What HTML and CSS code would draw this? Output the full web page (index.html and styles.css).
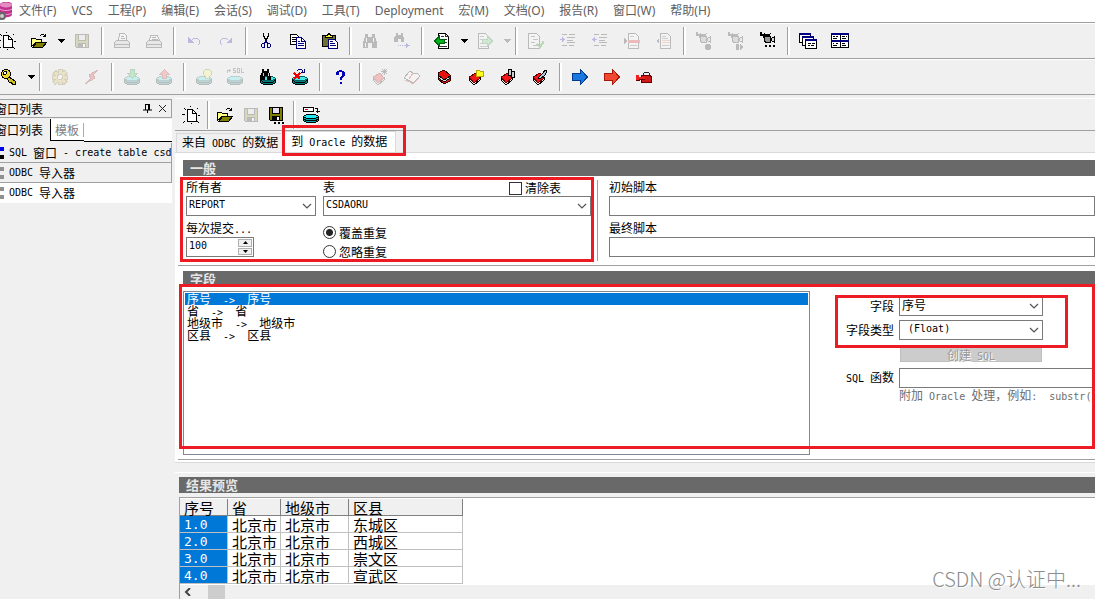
FILE: index.html
```
<!DOCTYPE html>
<html lang="zh-CN">
<head>
<meta charset="utf-8">
<title>ODBC 导入器</title>
<link rel="stylesheet" href="styles.css">
</head>
<body>
<svg class="sprite" aria-hidden="true">
  <symbol id="i-new" viewBox="0 0 18 18"><path d="M5.500 3.500h5l4 4v8h-9z" fill="#fff" stroke="#000"/><path d="M10.500 3.500v4h4" fill="none" stroke="#000"/><path d="M8 0h1v1H8zM2 2h1v1H2zM3 3h1v1H3zM15 2h1v1h-1zM0 8h3v1H0zM16 9h2v1h-2zM2 15h1v1H2zM1 16h1v1H1zM15 15h1v1h-1zM16 16h1v1h-1zM9 17h1v1H9z"/></symbol>
  <symbol id="i-open" viewBox="0 0 16 16"><path d="M.5 5.500h4l1 1h5v3h-6l-4 4z" fill="#ffff80" stroke="#000"/><path d="M1.500 14.500l4-5h10l-4 5z" fill="#808000" stroke="#000"/><path d="M8.500 3.500l2-2h2l2 2M14.500.5v3h-3" fill="none" stroke="#000"/></symbol>
  <symbol id="i-save" viewBox="0 0 16 16"><path d="M1.500 1.500h13v13h-12l-1-1z" fill="#808000" stroke="#000"/><path d="M4.500 1.500h7v6h-7z" fill="#e8e0f0" stroke="#000"/><path d="M4 10h8v5H4z" fill="#000"/><path d="M9 11h2v3H9z" fill="#fff"/></symbol>
  <symbol id="i-saveas" viewBox="0 0 18 18"><path d="M1.500 1.500h13v13h-12l-1-1z" fill="#808000" stroke="#000"/><path d="M4.500 1.500h7v6h-7z" fill="#e8e0f0" stroke="#000"/><path d="M4 10h8v5H4z" fill="#000"/><path d="M9 11h2v3H9z" fill="#fff"/><path d="M6 16h2v2H6zM10 16h2v2h-2zM14 16h2v2h-2z"/></symbol>
  <symbol id="i-print" viewBox="0 0 16 16"><path d="M4.500 7.500l1-7h5l2 2v5" fill="#fff" stroke="#000"/><path d="M7 3.500h3M7 5.500h4" stroke="#000"/><path d="M.5 9.500l2-2h11l2 2v5H.5z" fill="#ccc" stroke="#000"/><path d="M1 11.500h14" stroke="#000"/></symbol>
  <symbol id="i-print2" viewBox="0 0 16 16"><path d="M3.500 7.500l1-5h7l2 5" fill="#fff" stroke="#000"/><path d="M6 4.500h4M6 6.500h6" stroke="#000"/><path d="M.5 9.500l2-2h11l2 2v5H.5z" fill="#ccc" stroke="#000"/><path d="M1 11.500h14" stroke="#000"/></symbol>
  <symbol id="i-undo" viewBox="0 0 16 16"><path d="M5.500 7.500l2-2h4l2 2v3l-2 2" fill="none" stroke="#0000a0"/><path d="M2 4v6h6z" fill="#0000a0"/></symbol>
  <symbol id="i-redo" viewBox="0 0 16 16"><path d="M10.500 7.500l-2-2h-4l-2 2v3l2 2" fill="none" stroke="#0000a0"/><path d="M14 4v6H8z" fill="#0000a0"/></symbol>
  <symbol id="i-cut" viewBox="0 0 16 16"><path d="M5.500 0v3l3 5M10.500 0v3l-3 5" fill="none" stroke="#000" stroke-width="1.400"/><path d="M7.500 7v2l-2 2M8.500 7v2l2 2" fill="none" stroke="#000080"/><path d="M4.500 10.500h2v4h-2l-1-1v-2zM9.500 10.500h2l1 1v2l-1 1h-2z" fill="none" stroke="#000080"/></symbol>
  <symbol id="i-copy" viewBox="0 0 16 16"><path d="M.5 1.500h6l3 3v7h-9z" fill="#fff" stroke="#000"/><path d="M2 4.500h4M2 6.500h5M2 8.500h5" stroke="#000"/><path d="M6.500 4.500h5l4 4v7h-9z" fill="#fff" stroke="#000080"/><path d="M11.500 4.500v4h4M8 8.500h2M8 10.500h6M8 12.500h6" fill="none" stroke="#000080"/></symbol>
  <symbol id="i-paste" viewBox="0 0 16 16"><path d="M.5 2.500h13v11H.5z" fill="#707030" stroke="#000"/><path d="M3.500 4.500v-2h2l1-2h1l1 2h2v2z" fill="#ffff40" stroke="#000"/><path d="M6.500 6.500h6l3 3v6h-9z" fill="#fff" stroke="#000080"/><path d="M8 8.500h3M8 10.500h5M8 12.500h6" stroke="#000080"/></symbol>
  <symbol id="i-find" viewBox="0 0 16 16"><path d="M3 1h3v3h4V1h3v3l2 5v6h-5v-5H6v5H1V9l2-5z"/><path d="M4.500 5v4M11.500 5v4M3.500 10v4" stroke="#fff"/></symbol>
  <symbol id="i-findnext" viewBox="0 0 16 16"><path d="M2 0h2v2h3V0h2v2l1 3v4H7V6H4v3H0V5l2-3z"/><path d="M4 12.500h7" stroke="#0000a0" stroke-dasharray="1 1"/><path d="M11 12.500h5M12.500 10v5M13.500 11v3" fill="none" stroke="#0000a0"/></symbol>
  <symbol id="i-back" viewBox="0 0 16 16"><path d="M4.500.5h7l3 3v12h-10z" fill="#fff" stroke="#000" stroke-width="1.400"/><path d="M11.500.5v3h3M7 3.500h3M10 6.500h3M10 9.500h3M6 13.500h7" fill="none" stroke="#333"/><path d="M.5 8l5-5v3h5v4h-5v3z" fill="#00b020" stroke="#006010"/></symbol>
  <symbol id="i-forward" viewBox="0 0 16 16"><path d="M1.500.5h7l3 3v12h-10z" fill="#fff" stroke="#000"/><path d="M3 3.500h4M3 6.500h3M3 10.500h3M3 13.500h7" stroke="#555"/><path d="M15.500 8l-5-5v3h-5v4h5v3z" fill="#60d060" stroke="#108030"/></symbol>
  <symbol id="i-check" viewBox="0 0 16 16"><path d="M.5.5h8l3 3v12H.5z" fill="#fff" stroke="#000"/><path d="M3 3.500h4M5 6.500h5M3 9.500h4M5 12.500h4" stroke="#333" stroke-width="1.400"/><path d="M9 11l3 3 4-6" fill="none" stroke="#008000" stroke-width="2"/></symbol>
  <symbol id="i-indent" viewBox="0 0 16 16"><path d="M2 1.500h5M9 1.500h6M7 4.500h8M7 7.500h6M7 9.500h8M2 12.500h5M9 12.500h5" stroke="#000"/><path d="M0 6.500h5M2.500 4v5M3.500 5v3" fill="none" stroke="#0000c0"/></symbol>
  <symbol id="i-outdent" viewBox="0 0 16 16"><path d="M2 1.500h5M9 1.500h6M7 4.500h8M7 7.500h6M7 9.500h8M2 12.500h5M9 12.500h5" stroke="#000"/><path d="M0 6.500h5M2.500 4v5M1.500 5v3" fill="none" stroke="#0000c0"/></symbol>
  <symbol id="i-comment" viewBox="0 0 16 16"><path d="M4.500.5h7l3 3v12h-10z" fill="#fff" stroke="#000"/><path d="M6 3.500h4M6 12.500h7" stroke="#555"/><path d="M4 7h12v3H4z" fill="#e00000"/><path d="M0 5l3 3-3 3z"/></symbol>
  <symbol id="i-uncomment" viewBox="0 0 16 16"><path d="M4.500.5h7l3 3v12h-10z" fill="#fff" stroke="#000"/><path d="M6 3.500h4M6 5.500h6M6 12.500h7" stroke="#555"/><path d="M6 7.500h8M6 9.500h8" stroke="#e08060"/><path d="M3 5L0 8l3 3z"/></symbol>
  <symbol id="i-cam" viewBox="0 0 18 18"><path d="M5.500 4.500h6v6h-5l-1-2z" fill="#999" stroke="#000"/><path d="M1 0h2v2h8v2H5v2H4V4H1z"/><path d="M5 1h1v1H5zM11 1h1v1h-1z"/><path d="M12.500 6.500l3-2v6l-3-2z" fill="#ddd" stroke="#000"/></symbol>
  <symbol id="i-rec" viewBox="0 0 18 18"><use href="#i-cam"/><circle cx="13" cy="15" r="3"/></symbol>
  <symbol id="i-play" viewBox="0 0 18 18"><use href="#i-cam"/><path d="M9 12h3v6H9zM13 12l3 3-3 3z"/></symbol>
  <symbol id="i-camdots" viewBox="0 0 18 18"><use href="#i-cam"/><path d="M6 13h2v2H6zM10 13h2v2h-2zM14 13h2v2h-2z"/></symbol>
  <symbol id="i-cascade" viewBox="0 0 18 18"><g fill="#fff" stroke="#000"><path d="M.5 1.500h11v9H.5z"/><path d="M3.500 4.500h11v9h-11z"/><path d="M6.500 7.500h11v9h-11z"/></g><path d="M0 1h12v2H0zM3 4h12v2H3zM6 7h12v2H6z" fill="#000080"/><path d="M9 11.500h3M13 11.500h3M9 13.500h2M12 13.500h3" stroke="#000"/></symbol>
  <symbol id="i-tile" viewBox="0 0 18 18"><path d="M.5 1.500h17v14H.5zM9 1v14M1 8.500h16" fill="#fff" stroke="#000"/><path d="M0 1h18v2H0zM0 8h18v2H0z" fill="#000080"/><path d="M2 4.500h2M5 4.500h2M11 4.500h3M15 4.500h1M2 6.500h4M11 6.500h4M2 11.500h1M5 11.500h2M11 11.500h3M2 13.500h4M11 13.500h4" stroke="#000"/></symbol>
  <symbol id="i-key" viewBox="0 0 16 16"><path d="M7.500 7.500l7 5v3h-3l-1-2h-2l-3-5" fill="#d0c020" stroke="#000"/><circle cx="5" cy="5" r="4.500" fill="#e8d830" stroke="#000"/><circle cx="4" cy="4" r="1.500" fill="#fff" stroke="#000"/></symbol>
  <symbol id="i-gear" viewBox="0 0 16 16"><path d="M6 .5h4v2l3-1 2 3-2 2h2.500v4H13l2 2-3 3-2-2v2H6v-2l-3 2-2-3 2-2H.5v-4H3l-2-2 3-3 2 2z" fill="#d0b840" stroke="#776610"/><circle cx="8" cy="8" r="2.500" fill="#fff" stroke="#776610"/></symbol>
  <symbol id="i-bolt" viewBox="0 0 16 16"><path d="M14 1L5 6l2 3-6 6 10-6-2-3z" fill="#f02020" stroke="#700"/></symbol>
  <symbol id="i-db" viewBox="0 0 16 16"><path d="M.5 9.500v4l3 2h9l3-2v-4z" fill="#008080" stroke="#000"/><path d="M1 11.500l3 2h8l3-2" fill="none" stroke="#000"/><path d="M.5 9.500l3-2h9l3 2-3 2h-9z" fill="#40e8e8" stroke="#006060"/></symbol>
  <symbol id="i-commit" viewBox="0 0 16 16"><use href="#i-db"/><path d="M6.500.5h4v4h3l-5 5-5-5h3z" fill="#20c840" stroke="#087018"/></symbol>
  <symbol id="i-rollback" viewBox="0 0 16 16"><use href="#i-db"/><path d="M6.500 9.500h4v-4h3l-5-5-5 5h3z" fill="#f04040" stroke="#901010"/></symbol>
  <symbol id="i-dbbulb" viewBox="0 0 16 16"><use href="#i-db"/><path d="M9.500.5h4l2 2v3l-2 2v2h-4v-2l-2-2v-3z" fill="#ffff60" stroke="#776610"/></symbol>
  <symbol id="i-dbsql" viewBox="0 0 18 18"><g transform="translate(0 1)"><use href="#i-db" width="16" height="16"/></g><path d="M.5 5V2.500h3M2.500 1v3M9 .5H6.500v2h2v2H6M10.500.5h2v4h-2zM14.500 0v4.500H17" fill="none" stroke="#333"/></symbol>
  <symbol id="i-dbfind" viewBox="0 0 16 16"><use href="#i-db"/><path d="M2 0h2v2h3V0h2v3l2 5v3H7V7H5v4H0V7l2-4z"/><path d="M3.500 4v3M8.500 4v3" stroke="#ccc"/></symbol>
  <symbol id="i-dberr" viewBox="0 0 16 16"><use href="#i-db"/><path d="M2 4l6 6M8 4l-6 6" stroke="#f00000" stroke-width="2.400"/><path d="M4.500 2.500l2-2h3l2 3M12.500 0v3.500H9" fill="none" stroke="#000080"/></symbol>
  <symbol id="i-help" viewBox="0 0 16 16"><path d="M4 3h1V2h2V1h3v1h2v1h1v4h-1v1h-1v1h-1v2H8V8h1V7h1V3H7v3H4zM8 13h2v2H8z" fill="#0000c0"/></symbol>
  <symbol id="i-book" viewBox="0 0 16 16"><path d="M1 9l5 5 6-5v2l-6 5-5-5z" fill="#eee" stroke="#000"/><path d="M1 8l7-4 4 5-6 5z" fill="#f01818" stroke="#600"/></symbol>
  <symbol id="i-bookstar" viewBox="0 0 16 16"><use href="#i-book"/><path d="M12.500 0v6M9 2.500h6M10 0l5 5M15 0l-5 5" stroke="#000"/></symbol>
  <symbol id="i-bookopen" viewBox="0 0 16 16"><path d="M0 9l6-7 3 2 5 1 2 2-7 7-3-2z" fill="#fff" stroke="#000"/><path d="M9 4L5 10M1 11l5 2 3 2 6-6" fill="none" stroke="#b00"/></symbol>
  <symbol id="i-books" viewBox="0 0 16 16"><path d="M2 4l6-3 6 5v6l-6 3-6-5z" fill="#e81010" stroke="#300"/><path d="M2 6l6 5 6-4M2 8l6 5 6-4" fill="none" stroke="#000"/><path d="M3 8l5 4 5-3" fill="none" stroke="#ddd"/></symbol>
  <symbol id="i-bookfolder" viewBox="0 0 16 16"><use href="#i-book"/><path d="M8.500 1.500h3l1 1h3v5h-7z" fill="#ffff20" stroke="#bba500"/></symbol>
  <symbol id="i-bookcopy" viewBox="0 0 16 16"><use href="#i-book"/><path d="M8.500.5h3v6h-3zM11.500 2.500h3v6h-3z" fill="#ccc" stroke="#000"/></symbol>
  <symbol id="i-bookpen" viewBox="0 0 16 16"><use href="#i-book"/><path d="M6 9l5-5 2-3 2 1-2 4-5 4z" fill="#acd" stroke="#000"/></symbol>
  <symbol id="i-bluearrow" viewBox="0 0 16 16"><path d="M.5 4.500h8v-4l7 7.500-7 7.500v-4h-8z" fill="#1878e0" stroke="#003c90"/></symbol>
  <symbol id="i-redarrow" viewBox="0 0 16 16"><path d="M.5 4.500h8v-4l7 7.500-7 7.500v-4h-8z" fill="#f04830" stroke="#a81808"/></symbol>
  <symbol id="i-toolbox" viewBox="0 0 16 16"><path d="M7.500 7V4.500l1-1h4l1 1V7" fill="none" stroke="#222" stroke-width="1.400"/><path d="M5.500 6.500h9l1 2v5h-10z" fill="#d01818" stroke="#600"/><path d="M0 6h3v2h6v2H3v1H0z" fill="#f02020"/><path d="M0 11h3v-1h6" fill="none" stroke="#600"/></symbol>
  <symbol id="i-dbimport" viewBox="0 0 18 18"><path d="M1.500 10.500v4l3 2h9l3-2v-4z" fill="#00b0b0" stroke="#000"/><path d="M2 13.500l3 1h8l3-1" fill="none" stroke="#000"/><path d="M1.500 10.500l3-2h9l3 2-3 2h-9z" fill="#20e8f0" stroke="#000"/><path d="M1.500 1.500h10v4h-10z" fill="#fff" stroke="#000"/><path d="M3 3.500h3" stroke="#f00"/><path d="M13 2.500h2.500V7M13.500 5.500h4" fill="none" stroke="#000"/></symbol>
  <symbol id="i-chev" viewBox="0 0 10 6"><path d="M1 1l4 4 4-4" fill="none" stroke="#555" stroke-width="1.200"/></symbol>
  <symbol id="i-drop" viewBox="0 0 8 4"><path d="M0 0h8L4 4z"/></symbol>
</svg>

<div class="app">
  <nav class="menu">
    <svg class="logo" viewBox="0 0 14 18"><path d="M0 2c3-3 10-3 12 0v11c-2 3-9 3-12 0z" fill="#c0308c"/><ellipse cx="6" cy="3" rx="6" ry="2.500" fill="#e68cc4"/><path d="M0 7c3 2 9 2 12 0M0 11c3 2 9 2 12 0" fill="none" stroke="#f0a8d4"/><circle cx="2" cy="14" r="3" fill="#ccc" stroke="#666" stroke-width="2"/></svg>
    <a href="#">文件(F)</a><a href="#">VCS</a><a href="#">工程(P)</a><a href="#">编辑(E)</a><a href="#">会话(S)</a><a href="#">调试(D)</a><a href="#">工具(T)</a><a href="#">Deployment</a><a href="#">宏(M)</a><a href="#">文档(O)</a><a href="#">报告(R)</a><a href="#">窗口(W)</a><a href="#">帮助(H)</a>
  </nav>

  <div class="bar bar-main">
    <button aria-label="新建"><svg class="wide"><use href="#i-new"/></svg></button>
    <button aria-label="打开"><svg><use href="#i-open"/></svg></button>
    <button class="drop" aria-label="最近文件"><svg><use href="#i-drop"/></svg></button>
    <button disabled aria-label="保存"><svg><use href="#i-save"/></svg></button>
    <i class="sep"></i>
    <button disabled aria-label="打印"><svg><use href="#i-print"/></svg></button>
    <button disabled aria-label="打印设置"><svg><use href="#i-print2"/></svg></button>
    <i class="sep"></i>
    <button disabled aria-label="撤销"><svg><use href="#i-undo"/></svg></button>
    <button disabled aria-label="重做"><svg><use href="#i-redo"/></svg></button>
    <i class="sep"></i>
    <button aria-label="剪切"><svg><use href="#i-cut"/></svg></button>
    <button aria-label="复制"><svg><use href="#i-copy"/></svg></button>
    <button aria-label="粘贴"><svg><use href="#i-paste"/></svg></button>
    <i class="sep"></i>
    <button disabled aria-label="查找"><svg><use href="#i-find"/></svg></button>
    <button disabled aria-label="查找下一个"><svg><use href="#i-findnext"/></svg></button>
    <i class="sep"></i>
    <button aria-label="后退"><svg><use href="#i-back"/></svg></button>
    <button class="drop" aria-label="后退列表"><svg><use href="#i-drop"/></svg></button>
    <button disabled aria-label="前进"><svg><use href="#i-forward"/></svg></button>
    <button disabled class="drop" aria-label="前进列表"><svg><use href="#i-drop"/></svg></button>
    <i class="sep"></i>
    <button disabled aria-label="检查"><svg><use href="#i-check"/></svg></button>
    <button disabled aria-label="缩进"><svg><use href="#i-indent"/></svg></button>
    <button disabled aria-label="取消缩进"><svg><use href="#i-outdent"/></svg></button>
    <button disabled aria-label="注释"><svg><use href="#i-comment"/></svg></button>
    <button disabled aria-label="取消注释"><svg><use href="#i-uncomment"/></svg></button>
    <i class="sep"></i>
    <button disabled aria-label="录制宏"><svg class="wide"><use href="#i-rec"/></svg></button>
    <button disabled aria-label="播放宏"><svg class="wide"><use href="#i-play"/></svg></button>
    <button aria-label="宏库"><svg class="wide"><use href="#i-camdots"/></svg></button>
    <i class="sep"></i>
    <button aria-label="层叠"><svg class="wide"><use href="#i-cascade"/></svg></button>
    <button aria-label="平铺"><svg class="wide"><use href="#i-tile"/></svg></button>
  </div>

  <div class="bar bar-session">
    <button aria-label="登录"><svg><use href="#i-key"/></svg></button>
    <button class="drop" aria-label="登录列表"><svg><use href="#i-drop"/></svg></button>
    <i class="sep"></i>
    <button disabled aria-label="执行"><svg><use href="#i-gear"/></svg></button>
    <button disabled aria-label="中断"><svg><use href="#i-bolt"/></svg></button>
    <i class="sep"></i>
    <button disabled aria-label="提交"><svg><use href="#i-commit"/></svg></button>
    <button disabled aria-label="回滚"><svg><use href="#i-rollback"/></svg></button>
    <i class="sep"></i>
    <button disabled aria-label="解释计划"><svg><use href="#i-dbbulb"/></svg></button>
    <button disabled aria-label="SQL"><svg class="wide"><use href="#i-dbsql"/></svg></button>
    <button aria-label="查找数据库对象"><svg><use href="#i-dbfind"/></svg></button>
    <button aria-label="编译无效对象"><svg><use href="#i-dberr"/></svg></button>
    <i class="sep"></i>
    <button aria-label="帮助"><svg><use href="#i-help"/></svg></button>
    <i class="sep"></i>
    <button disabled aria-label="新建书签"><svg><use href="#i-bookstar"/></svg></button>
    <button disabled aria-label="打开手册"><svg><use href="#i-bookopen"/></svg></button>
    <button aria-label="手册"><svg><use href="#i-books"/></svg></button>
    <button aria-label="文件夹"><svg><use href="#i-bookfolder"/></svg></button>
    <button aria-label="复制手册"><svg><use href="#i-bookcopy"/></svg></button>
    <button aria-label="编辑手册"><svg><use href="#i-bookpen"/></svg></button>
    <i class="sep"></i>
    <button aria-label="下一步"><svg><use href="#i-bluearrow"/></svg></button>
    <button aria-label="跳转"><svg><use href="#i-redarrow"/></svg></button>
    <button aria-label="工具箱"><svg><use href="#i-toolbox"/></svg></button>
  </div>

  <div class="body">
    <aside class="side">
      <div class="side-title"><span>窗口列表</span>
        <button aria-label="固定"><svg viewBox="0 0 9 9"><path d="M2.500 0v6M2 .5h5M5.500 0v6M6.500 0v6M0 6h9M4.500 6v3" fill="none" stroke="#000"/></svg></button>
        <button aria-label="关闭"><svg viewBox="0 0 9 9"><path d="M1 1l7 7M8 1L1 8" stroke="#222"/></svg></button>
      </div>
      <div class="side-tabs"><button class="on">窗口列表</button><button>模板</button></div>
      <ul class="windows">
        <li class="sql"><span class="en">SQL</span> 窗口 <span class="en">- create table csd</span></li>
        <li class="current"><span class="en">ODBC</span> 导入器</li>
        <li class="last"><span class="en">ODBC</span> 导入器</li>
      </ul>
    </aside>

    <main class="work">
      <div class="bar bar-doc">
        <button aria-label="新建"><svg class="wide"><use href="#i-new"/></svg></button>
        <i class="sep"></i>
        <button aria-label="打开"><svg><use href="#i-open"/></svg></button>
        <button disabled aria-label="保存"><svg><use href="#i-save"/></svg></button>
        <button aria-label="另存为"><svg class="wide"><use href="#i-saveas"/></svg></button>
        <i class="sep"></i>
        <button aria-label="导入"><svg class="wide"><use href="#i-dbimport"/></svg></button>
      </div>
      <div class="tabs">
        <button>来自<span class="en"> ODBC </span>的数据</button>
        <button class="on">到<span class="en"> Oracle </span>的数据</button>
      </div>

      <div class="page">
        <section class="general">
          <h2>一般</h2>
          <div class="general-form">
            <div class="col owner">
              <label for="owner">所有者</label>
              <span class="combo"><select id="owner" class="en"><option>REPORT</option></select><svg><use href="#i-chev"/></svg></span>
              <label for="every" class="second">每次提交<span class="en">...</span></label>
              <span class="spin"><input id="every" class="en" value="100"><span class="steps"><button aria-label="增加"><svg><path d="M0 3h5L2.500 0z"/></svg></button><button aria-label="减少"><svg><path d="M0 0h5L2.500 3z"/></svg></button></span></span>
            </div>
            <div class="col target">
              <div class="split"><label for="table">表</label><label class="tick"><input type="checkbox">清除表</label></div>
              <span class="combo"><select id="table" class="en"><option>CSDAORU</option></select><svg><use href="#i-chev"/></svg></span>
              <label class="radio first"><input type="radio" name="dup" checked>覆盖重复</label>
              <label class="radio"><input type="radio" name="dup">忽略重复</label>
            </div>
            <div class="col scripts">
              <label for="init">初始脚本</label>
              <input id="init" class="text">
              <label for="final" class="second">最终脚本</label>
              <input id="final" class="text">
            </div>
          </div>
        </section>

        <section class="fields">
          <h2>字段</h2>
          <div class="fields-form">
            <ul class="list">
              <li class="picked">序号<span class="en">  -&gt;  </span>序号</li>
              <li>省<span class="en">  -&gt;  </span>省</li>
              <li>地级市<span class="en">  -&gt;  </span>地级市</li>
              <li>区县<span class="en">  -&gt;  </span>区县</li>
            </ul>
            <div class="props">
              <label for="field">字段</label>
              <span class="combo"><select id="field"><option>序号</option></select><svg><use href="#i-chev"/></svg></span>
              <label for="type">字段类型</label>
              <span class="combo"><select id="type" class="en"><option>&nbsp;(Float)</option></select><svg><use href="#i-chev"/></svg></span>
              <button class="create" disabled>创建<span class="en"> SQL</span></button>
              <label for="func"><span class="en">SQL </span>函数</label>
              <input id="func" class="text">
              <p class="hint">附加<span class="en"> Oracle </span>处理，例如<span class="en">:  substr(</span></p>
            </div>
          </div>
        </section>
      </div>

      <section class="preview">
        <h2>结果预览</h2>
        <div class="grid">
          <table>
            <colgroup><col class="c1"><col class="c2"><col class="c3"><col class="c4"></colgroup>
            <thead><tr><th>序号</th><th>省</th><th>地级市</th><th>区县</th></tr></thead>
            <tbody>
              <tr><td>1.0</td><td>北京市</td><td>北京市</td><td>东城区</td></tr>
              <tr><td>2.0</td><td>北京市</td><td>北京市</td><td>西城区</td></tr>
              <tr><td>3.0</td><td>北京市</td><td>北京市</td><td>崇文区</td></tr>
              <tr><td>4.0</td><td>北京市</td><td>北京市</td><td>宣武区</td></tr>
            </tbody>
          </table>
          <div class="scroll"><button aria-label="向左"><svg viewBox="0 0 8 8"><path d="M6 0L2 4l4 4" fill="none" stroke="#444" stroke-width="2"/></svg></button><i></i></div>
        </div>
      </section>
    </main>
  </div>
</div>

<div class="mark mark-tab"></div>
<div class="mark mark-general"></div>
<div class="mark mark-fields"></div>
<div class="mark mark-type"></div>
<div class="watermark">CSDN @认证中...</div>
</body>
</html>
```
FILE: styles.css
```
* { box-sizing: border-box; }
body {
  margin: 0;
  overflow: hidden;
  position: relative;
  font: 12px/14px "Noto Sans CJK SC", sans-serif;
  color: #000;
  background: #f0f0f0;
}
h2, p, ul { margin: 0; padding: 0; list-style: none; font-weight: normal; }
button, input, select { font: inherit; color: inherit; margin: 0; padding: 0; border: 0; background: none; border-radius: 0; }
.en { font-family: "DejaVu Sans Mono", monospace; font-size: 10px; white-space: pre; }
.sprite { position: absolute; width: 0; height: 0; }
.app { display: flex; flex-direction: column; height: 100vh; }

/* menu */
.menu {
  display: flex;
  align-items: center;
  gap: 15px;
  height: 22px;
  background: #fff;
  font: 12px/24px "Noto Sans", "Noto Sans CJK SC", sans-serif;
}
.menu a { color: #606060; text-decoration: none; white-space: nowrap; }
.logo { width: 14px; height: 18px; margin-right: -10px; flex: none; }

/* toolbars */
.bar { display: flex; align-items: center; flex: none; height: 36px; border-top: 1px solid #a0a0a0; box-shadow: inset 0 1px #fff; }
.bar button { width: 32px; height: 28px; flex: none; display: flex; align-items: center; justify-content: center; }
.bar svg { width: 16px; height: 16px; shape-rendering: crispEdges; }
.bar svg.wide { width: 18px; height: 18px; }
.bar button:disabled { opacity: .22; }
.bar .drop { width: 11px; }
.bar .drop svg { width: 8px; height: 4px; }
.sep { flex: none; width: 8px; height: 28px; display: flex; justify-content: center; }
.sep::before { content: ""; width: 2px; border-left: 1px solid #a0a0a0; background: #fff; }
.bar-main { padding-top: 1px; }
.bar-main > :first-child { margin-left: -9px; }
.bar-session > :first-child { margin-left: -7px; }
.bar-session { border-bottom: 1px solid #a0a0a0; height: 37px; }

.body { flex: 1; min-height: 0; display: flex; gap: 3px; padding-top: 3px; }

/* window list */
.side { width: 172px; flex: none; display: flex; flex-direction: column; overflow: hidden; }
.side-title {
  display: flex;
  align-items: center;
  gap: 6px;
  height: 19px;
  margin: 1px 0;
  padding-right: 4px;
  border: 1px solid #a0a0a0;
  border-left: 0;
}
.side-title span { margin-left: -5px; flex: 1; }
.side-title svg { width: 9px; height: 9px; display: block; }
.side-tabs { display: flex; height: 22px; background: #fff; margin-bottom: 2px; }
.side-tabs button { padding: 0 4px; height: 22px; color: #808080; border-bottom: 1px solid #000; }
.side-tabs::after { content: ""; flex: 1; height: 22px; border-bottom: 1px solid #000; }
.side-tabs button:last-child { width: 33px; text-align: left; background: linear-gradient(#aaa, #aaa) right center / 1px 14px no-repeat; }
.side-tabs button.on { margin-left: -5px; width: 56px; padding: 0; text-align: left; color: #000; background: #f0f0f0; border-bottom: 0; border-right: 1px solid #000; }
.windows li {
  display: flex;
  gap: 6px;
  align-items: center;
  height: 20px;
  white-space: nowrap;
  overflow: hidden;
  border-bottom: 1px solid #a0a0a0;
  border-right: 1px solid #a0a0a0;
}
.windows li::before { content: ""; width: 4px; height: 12px; margin-right: -1px; flex: none; background: linear-gradient(#909090 4px, transparent 4px 8px, #909090 8px); }
.windows .sql::before { background: linear-gradient(#0000f0 4px, transparent 4px 8px, #000 8px); }
.windows .last { background: #fff; border: 0; }

/* document area */
.work { flex: 1; min-width: 0; display: flex; flex-direction: column; }
.bar-doc { height: 33px; padding-left: 3px; border-top: 1px solid #fff; border-bottom: 1px solid #a0a0a0; box-shadow: none; }
.bar-doc button { width: 26px; }
.tabs { display: flex; align-items: flex-end; height: 21px; padding-left: 1px; flex: none; }
.tabs button { height: 19px; padding: 0 4px 0 5px; white-space: nowrap; border: 1px solid #d9d9d9; border-bottom: 0; }
.tabs button.on { height: 21px; padding: 0 8px 1px 7px; background: #fff; }
.page { flex: 1; min-height: 0; display: flex; flex-direction: column; padding: 7px 0 2px 3px; background: #fff; border-bottom: 1px solid #d9d9d9; border-top: 1px solid #d9d9d9; }
h2 { height: 16px; padding-left: 7px; font-size: 13px; line-height: 16px; font-weight: bold; color: #e6e6e6; background: #696969; flex: none; }
.page h2 { margin-left: 5px; }
.page section { border-bottom: 1px solid #a0a0a0; }
.general-form { display: flex; padding: 4px 0 4px 8px; }
.col { display: flex; flex-direction: column; }
.col label { height: 16px; }
.col .second { margin-top: 5px; }
.owner { width: 130px; margin-right: 7px; }
.target { width: 268px; margin-right: 6px; }
.split { display: flex; justify-content: space-between; }
.tick, .radio { display: flex; align-items: center; gap: 3px; }
.tick { margin-right: 30px; }
.tick input, .radio input { width: 13px; height: 13px; appearance: none; border: 1px solid #333; background: #fff; flex: none; }
.radio input { border-radius: 50%; }
.radio input:checked { background: radial-gradient(circle, #222 3px, #fff 4px); }
.col .radio { height: 19px; }
.col .first { margin-top: 7px; }
.scripts { flex: 1; padding-left: 11px; border-left: 1px solid #a0a0a0; }
.combo { display: grid; align-items: center; height: 20px; border: 1px solid #7a7a7a; background: #fff; }
.combo > * { grid-area: 1 / 1; }
.combo select { width: 100%; height: 18px; padding: 0 2px 2px; appearance: none; }
.combo svg { width: 10px; height: 6px; justify-self: end; margin-right: 3px; pointer-events: none; }
.text { height: 20px; width: 100%; background: #fff; border: 1px solid #7a7a7a; }
.spin { display: flex; width: 68px; height: 20px; padding: 1px; border: 1px solid #7a7a7a; background: #fff; }
.spin input { flex: 1; min-width: 0; padding: 0 1px 2px; }
.steps { display: flex; flex-direction: column; gap: 1px; width: 14px; }
.steps button { flex: 1; display: flex; align-items: center; justify-content: center; background: #f0f0f0; border: 1px solid #b0b0b0; }
.steps svg { width: 5px; height: 3px; }

.fields { flex: 1; min-height: 0; display: flex; flex-direction: column; padding: 5px 0 4px; }
.fields-form { flex: 1; min-height: 0; display: flex; padding: 4px 0 0 5px; }
.list { flex: 0 1 627px; border: 1px solid #828790; padding: 1px; }
.list li { height: 12px; line-height: 12px; padding-left: 2px; white-space: pre; }
.list .picked { color: #fff; background: #0078d7; }
.props { flex: 1; min-width: 0; display: grid; grid-template-columns: 84px 144px 1fr; grid-auto-rows: 20px; row-gap: 4px; column-gap: 5px; align-content: start; align-items: center; padding-top: 5px; }
.props label { grid-column: 1; text-align: right; white-space: nowrap; }
.props .combo { grid-column: 2; }
.props .text { grid-column: 2 / 4; }
.create { grid-column: 2; height: 15px; margin: 0 1px; color: #999; background: #ccc; border: 1px solid #bfbfbf; line-height: 13px; text-shadow: 1px 1px #fff; }
.hint { grid-column: 2 / 4; align-self: start; margin-top: -4px; color: #6d6d6d; white-space: nowrap; }

.preview { flex: none; margin-top: 9px; border-top: 1px solid #fff; padding: 4px 0 0 4px; }
.grid { margin-top: 4px; border-top: 1px solid #a0a0a0; border-left: 1px solid #a0a0a0; background: #fff; }
table { table-layout: fixed; width: 283px; border-collapse: separate; border-spacing: 0; font-size: 15px; line-height: 15px; margin-top: 1px; }
.c1 { width: 48px; } .c2 { width: 53px; } .c3 { width: 68px; } .c4 { width: 114px; }
th, td { height: 17px; padding: 0 0 0 4px; text-align: left; font-weight: normal; border-right: 1px solid #c0c0c0; border-bottom: 1px solid #c0c0c0; white-space: nowrap; }
th { background: #f0f0f0; border-color: #808080; }
td:first-child { color: #fff; background: #0078d7; font: 13px/15px "DejaVu Sans Mono", monospace; }
.scroll { display: flex; align-items: center; height: 14px; margin-top: 1px; background: #f0f0f0; }
.scroll button { width: 28px; height: 14px; padding-left: 4px; text-align: left; }
.scroll svg { width: 8px; height: 8px; display: block; }
.scroll i { width: 17px; height: 14px; background: #cdcdcd; }

/* annotations laid over the window */
.mark { position: absolute; border: 3px solid #ed1c24; pointer-events: none; }
.mark-tab { left: 282px; top: 125px; width: 124px; height: 31px; }
.mark-general { left: 180px; top: 177px; width: 414px; height: 85px; }
.mark-fields { left: 179px; top: 284px; right: 0; height: 165px; }
.mark-type { left: 835px; top: 295px; width: 233px; height: 53px; }
.watermark { position: absolute; right: 14px; bottom: 8px; font-size: 20px; line-height: 24px; font-weight: 300; color: #8c8c8c; text-shadow: 1px 1px #fff; }
```
